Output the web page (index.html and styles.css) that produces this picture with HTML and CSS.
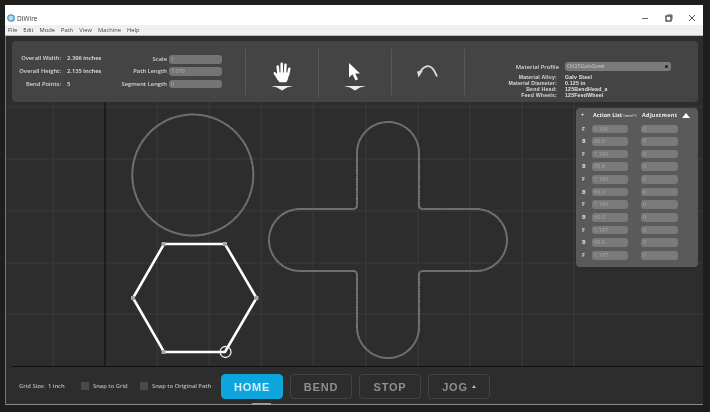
FILE: index.html
```html
<!DOCTYPE html>
<html lang="en">
<head>
<meta charset="utf-8">
<title>DIWire</title>
<link rel="stylesheet" href="styles.css">
</head>
<body>
<div class="window">
  <header class="titlebar">
    <svg class="app-icon" width="8" height="8" viewBox="0 0 8 8"><circle cx="4" cy="4" r="3.200" fill="#bcd9ee" stroke="#4a95c9" stroke-width="1.300"/></svg>
    <span class="app-name">DIWire</span>
    <div class="win-controls">
      <svg width="8" height="8" viewBox="0 0 8 8"><path d="M1 4.500h6" stroke="#666" stroke-width="1"/></svg>
      <svg width="8" height="8" viewBox="0 0 8 8"><rect x="1" y="2" width="5" height="5" fill="none" stroke="#333" stroke-width="1.200"/><path d="M2.500 1H7v4.500" fill="none" stroke="#555"/></svg>
      <svg width="8" height="8" viewBox="0 0 8 8"><path d="M1 1l6 6M7 1l-6 6" stroke="#555" stroke-width="1"/></svg>
    </div>
  </header>
  <nav class="menubar">
    <span>File</span><span>Edit</span><span>Mode</span><span>Path</span><span>View</span><span>Machine</span><span>Help</span>
  </nav>
  <main class="app">
    <section class="toolbar">
      <div class="stats">
        <span class="lbl">Overall Width:</span><span class="val">2.396 inches</span>
        <span class="lbl">Overall Height:</span><span class="val">2.135 inches</span>
        <span class="lbl">Bend Points:</span><span class="val">5</span>
      </div>
      <div class="fields">
        <span class="lbl">Scale</span><span class="input">1</span>
        <span class="lbl">Path Length</span><span class="input">7.076</span>
        <span class="lbl">Segment Length</span><span class="input">0</span>
      </div>
      <div class="tool">
        <svg width="24" height="30" viewBox="0 0 24 30">
          <g fill="none" stroke="#fff" stroke-width="2.500" stroke-linecap="round">
            <path d="M8.500 13 7.700 5.500M11.700 12V2.800M15 12l.5-8.200M18 14l1.300-6.200M8.500 17.500 4.800 12.300"/>
          </g>
          <path d="M7.500 11.500h11.500l-.8 5.500c-.4 2-1.200 3.300-2.200 4.200H9.500c-1.500-1.500-2.500-3-3-4.700z" fill="#fff"/>
          <path d="M1 25h22l-6 1.500-5 3-5-3z" fill="#eee"/>
        </svg>
      </div>
      <div class="tool">
        <svg width="24" height="30" viewBox="0 0 24 30">
          <path d="M6 2v14.500l3.500-3.200 3 6.200 2.500-1.200-2.800-5.800h4.800z" fill="#fff"/>
          <path d="M1 25h22l-6 1.500-5 3-5-3z" fill="#eee"/>
        </svg>
      </div>
      <div class="tool">
        <svg width="24" height="30" viewBox="0 0 24 30">
          <path d="M3 12.500C6 7.500 9 5.200 12 5.200c3 0 6 2.500 9 10.300" fill="none" stroke="#ddd" stroke-width="1.800"/>
          <path d="M1 10.500 7 9.500 2.500 16.500z" fill="#ddd"/>
        </svg>
      </div>
      <div class="material">
        <div class="profile">
          <span class="lbl">Material Profile</span>
          <span class="select">O625GalvSteel<i class="caret"></i></span>
        </div>
        <div class="spec">
          <span class="lbl">Material Alloy:</span><span class="val">Galv Steel</span>
          <span class="lbl">Material Diameter:</span><span class="val">0.125 in</span>
          <span class="lbl">Bend Head:</span><span class="val">125BendHead_a</span>
          <span class="lbl">Feed Wheels:</span><span class="val">125FeedWheel</span>
        </div>
      </div>
    </section>
    <section class="canvas">
      <svg class="drawing" width="697" height="265" viewBox="6 102 697 265">
        <g class="grid">
          <path d="M157 102V367M209 102V367M261 102V367M313 102V367M366 102V367M418 102V367M470 102V367M522 102V367M574 102V367M53 102V367"/>
          <path d="M6 107H703M6 159H703M6 211H703M6 263H703M6 314H703"/>
        </g>
        <path class="axis" d="M105 102V367M12 366.500H703"/>
        <circle class="shape" cx="192.800" cy="175" r="60.500"/>
        <path class="shape" d="M357 153a31 31 0 0 1 62 0V205q0 4 4 4H476a31 31 0 0 1 0 62H423q-4 0-4 4V327a31 31 0 0 1-62 0V275q0-4-4-4H300a31 31 0 0 1 0-62H353q4 0 4-4z"/>
        <path class="hex" d="M164 244H225L256.500 298 225 352H164L133 298z"/>
        <g class="nodes">
          <rect x="161.500" y="242" width="4" height="4"/><rect x="223" y="242" width="4" height="4"/>
          <rect x="131" y="296" width="4" height="4"/><rect x="254.500" y="296" width="4" height="4"/>
          <rect x="161.500" y="350" width="4" height="4"/>
        </g>
        <circle class="handle" cx="225.500" cy="352" r="5.500"/>
      </svg>
      <aside class="actions">
        <div class="act-head">
          <span class="plus">+</span>
          <span class="act-title act-list">Action List <small>(mm/°)</small></span>
          <span class="act-title act-adjust">Adjustment</span>
          <i class="up"></i>
        </div>
        <div class="act-row"><b>F</b><span class="input">1.196</span><span class="input">0</span></div>
        <div class="act-row"><b>B</b><span class="input">60.0</span><span class="input">0</span></div>
        <div class="act-row"><b>F</b><span class="input">1.196</span><span class="input">0</span></div>
        <div class="act-row"><b>B</b><span class="input">59.9</span><span class="input">0</span></div>
        <div class="act-row"><b>F</b><span class="input">1.196</span><span class="input">0</span></div>
        <div class="act-row"><b>B</b><span class="input">60.0</span><span class="input">0</span></div>
        <div class="act-row"><b>F</b><span class="input">1.196</span><span class="input">0</span></div>
        <div class="act-row"><b>B</b><span class="input">60.0</span><span class="input">0</span></div>
        <div class="act-row"><b>F</b><span class="input">1.197</span><span class="input">0</span></div>
        <div class="act-row"><b>B</b><span class="input">60.0</span><span class="input">0</span></div>
        <div class="act-row"><b>F</b><span class="input">1.197</span><span class="input">0</span></div>
      </aside>
    </section>
    <footer class="bottom">
      <span class="grid-size">Grid Size:&nbsp; 1 inch</span>
      <label class="snap snap-a"><i class="check"></i>Snap to Grid</label>
      <label class="snap snap-b"><i class="check"></i>Snap to Original Path</label>
      <div class="buttons">
        <span class="btn primary">HOME</span>
        <span class="btn">BEND</span>
        <span class="btn">STOP</span>
        <span class="btn">JOG <i class="jog-caret"></i></span>
      </div>
    </footer>
  </main>
</div>
</body>
</html>
```

FILE: styles.css
```css
* { box-sizing: border-box; }
html, body { margin: 0; height: 100%; }
body {
  width: 710px;
  height: 412px;
  overflow: hidden;
  padding: 5px 7px 0 5px;
  background: #1e1e1e;
  font-family: "Open Sans", "Liberation Sans", sans-serif;
}
.window {
  display: flex;
  flex-direction: column;
  width: 698px;
  height: 400px;
  filter: blur(0.35px);
}
.titlebar {
  display: flex;
  align-items: center;
  height: 20px;
  flex: none;
  padding: 6px 7px 0 2px;
  background: #fff;
}
.app-name { margin-left: 2px; font-size: 6.500px; color: #333; }
.win-controls { margin-left: auto; display: flex; gap: 15.500px; }
.menubar {
  display: flex;
  align-items: center;
  gap: 6px;
  height: 11px;
  flex: none;
  padding-left: 3px;
  background: #f0f0f0;
  border-bottom: 1px solid #bbb;
  font-size: 5.800px;
  color: #444;
}
.app {
  position: relative;
  flex: 1;
  display: flex;
  flex-direction: column;
  min-height: 0;
  padding-top: 5px;
  background: #2d2d2d;
  border-left: 1px solid #777;
  border-bottom: 1px solid #8a8a8a;
}
.app::after {
  content: "";
  position: absolute;
  left: 246px;
  bottom: -1px;
  width: 19px;
  height: 2px;
  background: #9a9a9a;
}
.lbl { color: #d8d8d8; font-size: 5.800px; font-weight: 600; text-align: right; white-space: nowrap; }
.val { color: #e4e4e4; font-size: 5.800px; font-weight: 600; white-space: nowrap; }
.input {
  display: block;
  height: 8.500px;
  padding-left: 2px;
  border-radius: 3px;
  background: #747474;
  color: #b5b5b5;
  font-size: 5.500px;
  line-height: 8.500px;
  overflow: hidden;
}
.toolbar {
  display: flex;
  height: 61px;
  flex: none;
  margin: 0 5px 0 6px;
  border-radius: 4px;
  background: #444;
}
.stats {
  display: grid;
  grid-template-columns: 49px auto;
  column-gap: 6px;
  align-content: start;
  grid-auto-rows: 13px;
  width: 139px;
  padding-top: 10px;
  align-items: center;
}
.fields {
  display: grid;
  grid-template-columns: 16px 53px;
  justify-content: start;
  column-gap: 2px;
  grid-auto-rows: 12.300px;
  width: 94px;
  padding-top: 14px;
  align-items: start;
  justify-items: end;
}
.fields .lbl { direction: rtl; line-height: 8.500px; }
.fields .input { width: 53px; justify-self: start; }
.tool {
  width: 73px;
  margin-top: 8px;
  height: 46px;
  padding-top: 12px;
  display: flex;
  justify-content: center;
  border-left: 1px solid #585858;
}
.material {
  flex: 1;
  border-left: 1px solid #585858;
  margin-top: 8px;
  height: 46px;
  padding-top: 13px;
  padding-left: 23px;
}
.profile { display: flex; align-items: center; height: 9px; }
.profile .lbl { width: 71px; }
.select {
  position: relative;
  display: block;
  width: 106px;
  height: 9px;
  margin-left: 6px;
  padding-left: 2px;
  border-radius: 3px;
  background: #7a7a7a;
  color: #c8c8c8;
  font-size: 5.500px;
  line-height: 9px;
}
.caret {
  position: absolute;
  right: 3px;
  top: 3px;
  width: 3px;
  height: 3px;
  background: #222;
  border-radius: 50%;
}
.spec {
  display: grid;
  grid-template-columns: 69px auto;
  justify-content: start;
  column-gap: 8px;
  grid-auto-rows: 6.100px;
  margin-top: 3px;
  align-items: center;
}
.spec .lbl, .spec .val {
  font-family: "Liberation Sans", sans-serif;
  font-size: 5.200px;
  font-weight: 700;
  line-height: 6.100px;
  letter-spacing: .2px;
}
.canvas { position: relative; height: 265px; flex: none; }
.drawing { display: block; }
.grid path { stroke: #3c3c3c; stroke-width: 1; fill: none; }
.axis { stroke: #111; stroke-width: 1.200; fill: none; }
.shape {
  fill: none;
  stroke: #767676;
  stroke-width: 2;
  stroke-dasharray: 1.700 .2;
}
.hex { fill: none; stroke: #fff; stroke-width: 2.600; }
.nodes rect { fill: #a8a8a8; }
.handle { fill: none; stroke: #eee; stroke-width: 1.300; }
.actions {
  position: absolute;
  left: 570px;
  top: 6px;
  width: 122px;
  height: 159px;
  padding: 2px 0 0 4px;
  border-radius: 4px;
  background: #5a5a5a;
}
.act-head {
  display: flex;
  align-items: center;
  height: 10px;
  margin-bottom: 4.500px;
  color: #eee;
  font-size: 5.500px;
  font-weight: 700;
}
.plus { width: 13px; padding-left: 1px; }
.act-title { white-space: nowrap; }
.act-list { width: 49px; }
.act-list small { font-size: 4px; font-weight: 400; }
.act-adjust { letter-spacing: .3px; }
.up {
  margin-left: 5px;
  width: 0;
  height: 0;
  border-left: 4.500px solid transparent;
  border-right: 4.500px solid transparent;
  border-bottom: 5px solid #fff;
}
.act-row {
  display: grid;
  grid-template-columns: 10px 36px 37px;
  height: 12.670px;
  align-items: start;
  padding-left: 2px;
}
.act-row b { color: #ddd; font-size: 5.500px; line-height: 8.500px; }
.act-row .input { background: #7a7a7a; color: #aaa; }
.act-row .input:last-child { margin-left: 13px; width: 37px; }
.bottom {
  display: flex;
  align-items: center;
  flex: 1;
  padding-left: 13px;
  min-height: 0;
  color: #bdbdbd;
  font-size: 5.800px;
  font-weight: 600;
}
.grid-size { width: 62px; }
.snap { display: flex; align-items: center; gap: 4px; white-space: nowrap; }
.snap-a { width: 59px; }
.snap-b { width: 81px; }
.check { display: block; width: 8px; height: 8px; background: #4a4a4a; }
.buttons { display: flex; gap: 7px; margin-top: 2px; }
.btn {
  display: flex;
  align-items: center;
  justify-content: center;
  width: 62px;
  height: 25px;
  border: 1px solid #444;
  border-radius: 4px;
  color: #8f8f8f;
  font-family: "Liberation Sans", sans-serif;
  font-size: 11px;
  font-weight: 700;
  letter-spacing: .8px;
}
.btn.primary { background: #0da5dc; border-color: #0da5dc; color: #d8f0fa; }
.jog-caret {
  display: inline-block;
  width: 0;
  height: 0;
  margin-left: 4px;
  border-left: 2px solid transparent;
  border-right: 2px solid transparent;
  border-bottom: 3px solid #bbb;
}
```
